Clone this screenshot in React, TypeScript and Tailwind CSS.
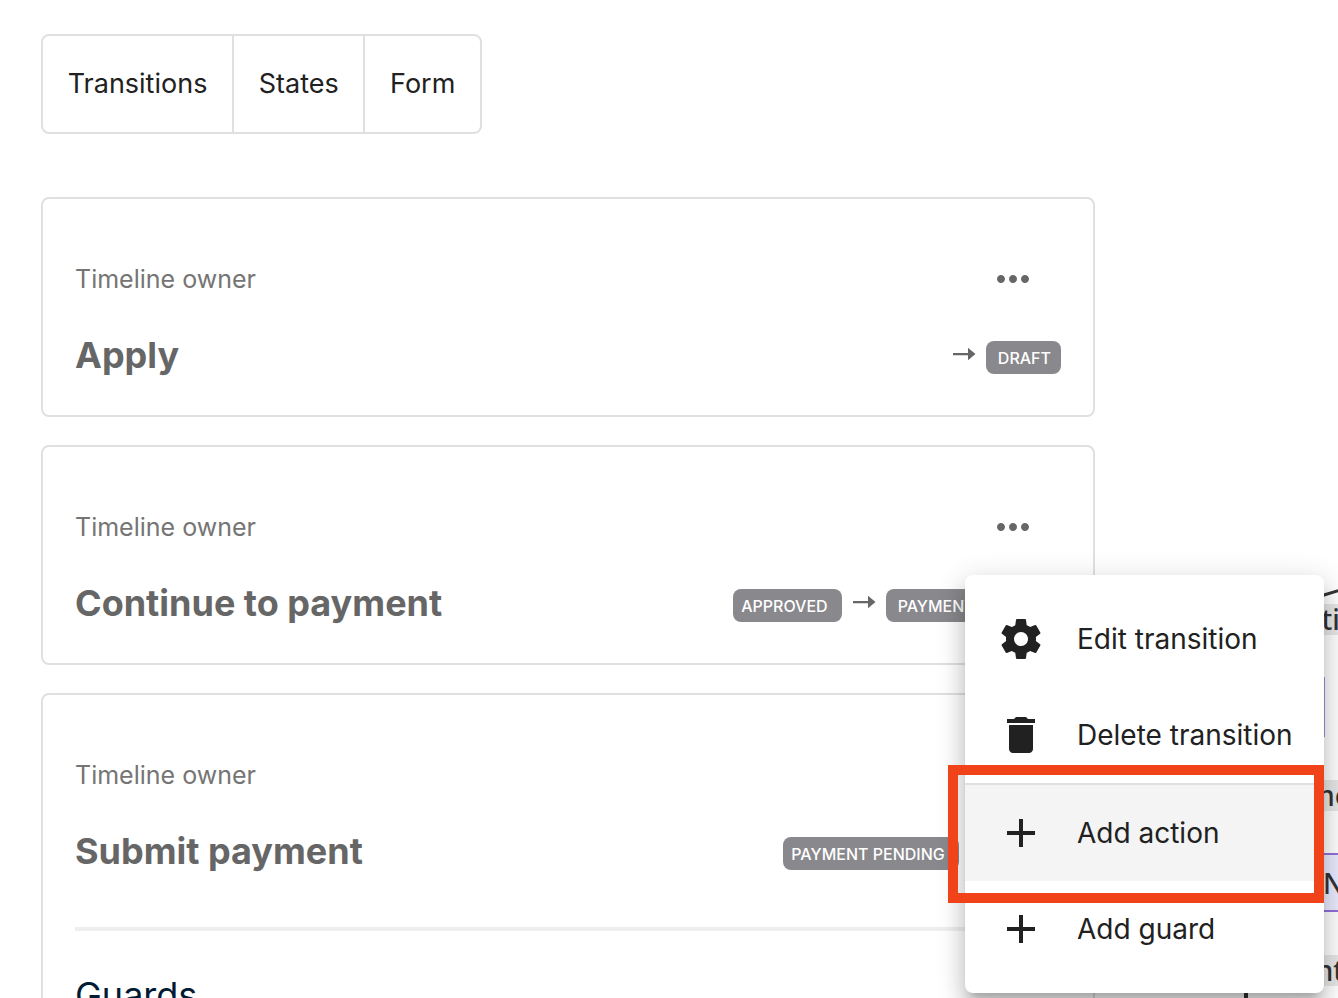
import React, { useState } from 'react';
import { MdAdd, MdDelete, MdMoreHoriz } from 'react-icons/md';

interface Transition {
  title: string;
  from?: string;
  to: string;
}

interface MenuEntry {
  label: string;
  icon: React.ComponentType<{ className?: string }>;
  divider?: boolean;
}

function GearIcon({ className }: { className?: string }) {
  return (
    <svg className={className} viewBox="0 0 24 24" fill="currentColor">
      <path d="M19.43 12.98c.04-.32.07-.64.07-.98s-.03-.66-.07-.98l2.11-1.65c.19-.15.24-.42.12-.64l-2-3.46c-.12-.22-.39-.3-.61-.22l-2.49 1c-.52-.4-1.08-.73-1.69-.98l-.38-2.65C14.46 2.18 14.25 2 14 2h-4c-.25 0-.46.18-.49.42l-.38 2.65c-.61.25-1.17.59-1.69.98l-2.49-1c-.23-.09-.49 0-.61.22l-2 3.46c-.13.22-.07.49.12.64l2.11 1.65c-.04.32-.07.65-.07.98s.03.66.07.98l-2.11 1.65c-.19.15-.24.42-.12.64l2 3.46c.12.22.39.3.61.22l2.49-1c.52.4 1.08.73 1.69.98l.38 2.65c.03.24.24.42.49.42h4c.25 0 .46-.18.49-.42l.38-2.65c.61-.25 1.17-.59 1.69-.98l2.49 1c.23.09.49 0 .61-.22l2-3.46c.12-.22.07-.49-.12-.64l-2.11-1.65zM12 15.5c-1.93 0-3.5-1.57-3.5-3.5s1.57-3.5 3.5-3.5 3.5 1.57 3.5 3.5-1.57 3.5-3.5 3.5z" />
    </svg>
  );
}

const tabs = ['Transitions', 'States', 'Form'];

const transitions: Transition[] = [
  { title: 'Apply', to: 'DRAFT' },
  { title: 'Continue to payment', from: 'APPROVED', to: 'PAYMENT PENDING' },
  { title: 'Submit payment', from: 'PAYMENT PENDING', to: 'PAID' },
];

const menuEntries: MenuEntry[] = [
  { label: 'Edit transition', icon: GearIcon },
  { label: 'Delete transition', icon: MdDelete },
  { label: 'Add action', icon: MdAdd, divider: true },
  { label: 'Add guard', icon: MdAdd },
];

function Tabs() {
  return (
    <nav className="flex w-[441px] divide-x-2 divide-[#e0e0e0] rounded-lg border-2 border-[#e0e0e0]">
      {tabs.map((tab) => (
        <button key={tab} type="button" className="h-24 flex-auto px-6 text-[27px] leading-10 text-[#212121]">
          {tab}
        </button>
      ))}
    </nav>
  );
}

function Arrow() {
  return (
    <svg className="mx-[10px] h-[26px] w-6 shrink-0" viewBox="0 0 24 26" fill="#666">
      <path d="M1 12h15V6.700l7.500 6.300-7.500 6.300V14.300H1z" />
    </svg>
  );
}

function TransitionCard({ transition, children }: { transition: Transition; children?: React.ReactNode }) {
  return (
    <section className="rounded-lg border-2 border-[#e0e0e0] p-8">
      <div className="flex h-24 items-center justify-between">
        <span className="text-[25px] leading-[38px] text-[#757575]">Timeline owner</span>
        <button type="button" aria-label="More options" className="p-6 text-[#666]">
          <MdMoreHoriz className="size-12" />
        </button>
      </div>
      <div className="flex h-14 items-center justify-between">
        <h2 className="text-[36px] leading-14 font-bold text-[#666]">{transition.title}</h2>
        <div className="flex items-start pt-[5px] text-base leading-8 font-medium text-white">
          {transition.from && (
            <span className="rounded-lg bg-[#89888c] pt-px pr-3.5 pl-2">{transition.from}</span>
          )}
          <Arrow />
          <span className="rounded-lg bg-[#89888c] pt-px pr-2.5 pl-3">{transition.to}</span>
        </div>
      </div>
      {children}
    </section>
  );
}

function TransitionMenu() {
  return (
    <div
      role="menu"
      className="absolute top-[575px] right-[14px] w-[359px] rounded-lg bg-white py-4 shadow-[0_10px_10px_-6px_rgba(0,0,0,0.2),0_16px_20px_2px_rgba(0,0,0,0.14),0_6px_28px_4px_rgba(0,0,0,0.12)]"
    >
      {menuEntries.map(({ label, icon: Icon, divider }) => (
        <React.Fragment key={label}>
          {divider && <hr className="border-t-2 border-[#e0e0e0]" />}
          <button
            type="button"
            role="menuitem"
            className={`flex h-24 w-full items-center gap-8 px-8 text-[28px] leading-10 whitespace-nowrap text-[#212121] ${divider ? 'bg-[#f4f4f4]' : ''}`}
          >
            <Icon className="size-12 shrink-0" />
            {label}
          </button>
        </React.Fragment>
      ))}
      {/* callout around the add action entry */}
      <div className="pointer-events-none absolute top-[190px] right-0 -left-[17px] h-[138px] border-10 border-[#f0431a]" />
    </div>
  );
}

// state diagram, nodes and edge labels are free on the canvas
function Diagram() {
  return (
    <aside className="relative w-[243px] shrink-0 overflow-hidden font-['Noto_Sans'] text-[28px] leading-[31px] font-medium whitespace-nowrap text-[#333]">
      <svg className="absolute inset-0 h-full w-full" fill="none" stroke="#333" strokeWidth="4">
        <path d="M151 998V900" />
        <path d="M180 615L229 595l20-6" strokeWidth="3" />
      </svg>
      <div className="absolute top-[677px] left-[100px] h-[60px] w-[130px] border-2 border-[#a98be3] bg-[#ececff]" />
      <div className="absolute top-[853px] left-[120px] h-[59px] w-[200px] border-2 border-[#9370db] bg-[#ececff] pl-[106px] leading-[56px]">N</div>
      <span className="absolute top-[604px] left-[174px] bg-[#e8e8e8]">Continue</span>
      <span className="absolute top-[780px] left-[165px] bg-[#e8e8e8]">payment</span>
      <span className="absolute top-[955px] left-[130px] bg-[#e8e8e8] pr-8">payment</span>
    </aside>
  );
}

export default function App() {
  const [menuOpen] = useState(true);

  return (
    <div className="relative flex h-screen overflow-hidden bg-white font-['Inter',sans-serif]">
      <main className="min-w-0 flex-1 pt-[34px] pl-[41px]">
        <Tabs />
        <div className="mt-[63px] flex flex-col gap-7">
          <TransitionCard transition={transitions[0]} />
          <TransitionCard transition={transitions[1]} />
          <TransitionCard transition={transitions[2]}>
            <hr className="mt-12 border-t-4 border-[#eee]" />
            <h3 className="mt-9 text-[36px] leading-14 text-[#001b33]">Guards</h3>
          </TransitionCard>
        </div>
      </main>
      <Diagram />
      {menuOpen && <TransitionMenu />}
    </div>
  );
}
